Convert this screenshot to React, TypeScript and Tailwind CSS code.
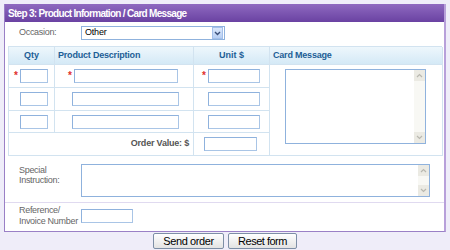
import React from 'react';

const Asterisk = ({ show }: { show: boolean }) => (
  <span className="w-[6px] text-[10px] leading-none text-[#e0302c] font-bold">{show ? '*' : ''}</span>
);

const TextBox = ({ w }: { w: string }) => (
  <div className={`${w} h-[14px] border border-[#8fb2dd] border-r-[#a9c5e6] border-b-[#a9c5e6] bg-white`} />
);

const ScrollArea = ({ w, h, bar }: { w: string; h: string; bar: string }) => (
  <div className={`${w} ${h} flex border border-[#8fb2dd] bg-white`}>
    <div className="flex-1" />
    <div className={`w-[11px] ${bar} flex flex-col justify-between bg-[#f8f8f4]`}>
      <div className="h-[11px] bg-[#ebeae3] flex items-center justify-center">
        <svg width="7" height="5" viewBox="0 0 7 5"><path d="M1 4 L3.5 1.5 L6 4" fill="none" stroke="#b9b8b0" strokeWidth="1.2" /></svg>
      </div>
      <div className="h-[11px] bg-[#ebeae3] flex items-center justify-center">
        <svg width="7" height="5" viewBox="0 0 7 5"><path d="M1 1 L3.5 3.5 L6 1" fill="none" stroke="#b9b8b0" strokeWidth="1.2" /></svg>
      </div>
    </div>
  </div>
);

const rows = [
  { h: 'h-[23px]', req: true, descPad: 'pl-[13px]', descW: 'w-[104px]' },
  { h: 'h-[23px]', req: false, descPad: 'pl-[17px]', descW: 'w-[107px]' },
  { h: 'h-[22px]', req: false, descPad: 'pl-[17px]', descW: 'w-[107px]' },
];

export default function App() {
  return (
    <div className="w-[450px] h-[250px] bg-[#efedf9] pt-[4px] pl-[4px] font-['Liberation_Sans',Arial,sans-serif]">
      <div className="w-[442px] h-[228px] border border-[#9a80c6] border-r-2 border-r-[#b8a0da] border-t-0 bg-white">
        <div className="h-[18px] bg-gradient-to-b from-[#8f69c0] to-[#6a42a2] pl-[3px] flex items-center text-white font-bold text-[10px] tracking-[-0.7px]">
          Step 3: Product Information / Card Message
        </div>

        <div className="flex items-center mt-[4px] pl-[14px]">
          <span className="w-[62px] text-[9px] text-[#666] tracking-[-0.3px]">Occasion:</span>
          <div className="w-[144px] h-[14px] border border-[#8fb2dd] flex items-center bg-white">
            <span className="flex-1 pl-[3px] text-[9px] text-black tracking-[-0.2px]">Other</span>
            <div className="w-[11px] h-[12px] mr-px bg-gradient-to-b from-[#dbe8fb] to-[#b7cff3] border border-[#a4c0ea] flex items-center justify-center">
              <svg width="7" height="5" viewBox="0 0 7 5"><path d="M1 1 L3.5 3.5 L6 1" fill="none" stroke="#3b4f78" strokeWidth="1.4" /></svg>
            </div>
          </div>
        </div>

        <div className="ml-[3px] mt-[6px] w-[434px] grid grid-cols-[46px_139px_76px_173px] border-l border-t border-[#d2e3f0]">
          <div className="h-[18px] flex items-center justify-center border-r border-b border-[#d2e3f0] bg-gradient-to-b from-[#eef7fc] to-[#d4e9f6] text-[9px] font-bold text-[#1d5e96]">Qty</div>
          <div className="h-[18px] flex items-center pl-[3px] border-r border-b border-[#d2e3f0] bg-gradient-to-b from-[#eef7fc] to-[#d4e9f6] text-[9px] font-bold text-[#1d5e96] tracking-[-0.2px]">Product Description</div>
          <div className="h-[18px] flex items-center justify-center border-r border-b border-[#d2e3f0] bg-gradient-to-b from-[#eef7fc] to-[#d4e9f6] text-[9px] font-bold text-[#1d5e96]">Unit $</div>
          <div className="h-[18px] flex items-center pl-[3px] border-r border-b border-[#d2e3f0] bg-gradient-to-b from-[#eef7fc] to-[#d4e9f6] text-[9px] font-bold text-[#1d5e96] tracking-[-0.2px]">Card Message</div>

          {rows.map((r, i) => (
            <React.Fragment key={i}>
              <div className={`${r.h} col-start-1 flex items-center pl-[5px] border-r border-b border-[#d2e3f0]`}>
                <Asterisk show={r.req} />
                <TextBox w="w-[28px]" />
              </div>
              <div className={`${r.h} flex items-center ${r.descPad} border-r border-b border-[#d2e3f0]`}>
                {r.req ? <Asterisk show /> : null}
                <TextBox w={r.descW} />
              </div>
              <div className={`${r.h} flex items-center pl-[8px] border-r border-b border-[#d2e3f0]`}>
                <Asterisk show={r.req} />
                <TextBox w="w-[52px]" />
              </div>
              {i === 0 ? (
                <div className="row-span-4 col-start-4 border-r border-b border-[#d2e3f0] pt-[4px] pl-[15px]">
                  <ScrollArea w="w-[141px]" h="h-[75px]" bar="h-[73px]" />
                </div>
              ) : null}
            </React.Fragment>
          ))}

          <div className="h-[23px] col-span-2 flex items-center justify-end pr-[4px] border-r border-b border-[#d2e3f0] text-[9px] font-bold text-[#555] tracking-[-0.2px]">Order Value: $</div>
          <div className="h-[23px] flex items-center pl-[10px] border-r border-b border-[#d2e3f0]">
            <TextBox w="w-[53px]" />
          </div>
        </div>

        <div className="flex mt-[8px] pl-[14px]">
          <div className="w-[62px] text-[9px] leading-[10px] text-[#666] tracking-[-0.3px] pt-[1px]">Special<br />Instruction:</div>
          <ScrollArea w="w-[349px]" h="h-[33px]" bar="h-[31px]" />
        </div>

        <div className="mt-[5px] border-t border-[#e0daf0] flex items-center pl-[14px] pt-[2px]">
          <div className="w-[62px] text-[9px] leading-[11px] text-[#666] tracking-[-0.3px]">Reference/<br />Invoice Number</div>
          <TextBox w="w-[52px]" />
        </div>
      </div>

      <div className="w-[442px] flex justify-center gap-[4px] mt-px">
        <button className="w-[71px] h-[16px] rounded-[2px] border border-[#7d8ea6] bg-gradient-to-b from-white to-[#e3e3e3] text-[11px] leading-none text-black tracking-[-0.4px]">Send order</button>
        <button className="w-[69px] h-[16px] rounded-[2px] border border-[#7d8ea6] bg-gradient-to-b from-white to-[#e3e3e3] text-[11px] leading-none text-black tracking-[-0.5px]">Reset form</button>
      </div>
    </div>
  );
}
